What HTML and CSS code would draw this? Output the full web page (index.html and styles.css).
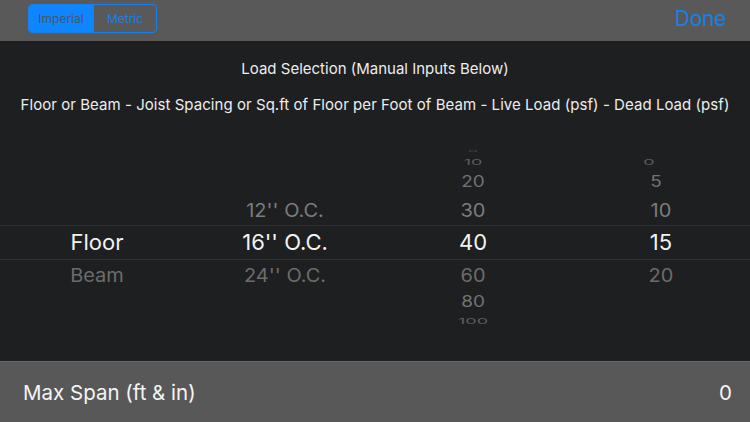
FILE: index.html
```html
<!DOCTYPE html>
<html>
<head>
<meta charset="utf-8">
<link rel="stylesheet" href="styles.css">
</head>
<body>
<div class="app">
  <header class="topbar">
    <div class="segmented">
      <span class="seg seg-on">Imperial</span>
      <span class="seg">Metric</span>
    </div>
    <span class="done">Done</span>
  </header>
  <main class="panel">
    <p class="title">Load Selection (Manual Inputs Below)</p>
    <p class="subtitle">Floor or Beam - Joist Spacing or Sq.ft of Floor per Foot of Beam - Live Load (psf) - Dead Load (psf)</p>
    <div class="picker">
      <div class="row r4"><span></span><span></span><span><i>0</i></span><span></span></div>
      <div class="row r3"><span></span><span></span><span><i>10</i></span><span><i class="shift-l">0</i></span></div>
      <div class="row r2"><span></span><span></span><span><i>20</i></span><span><i class="shift-s">5</i></span></div>
      <div class="row r1"><span></span><span><i>12'' O.C.</i></span><span><i>30</i></span><span><i>10</i></span></div>
      <div class="row sel"><span><i>Floor</i></span><span><i>16'' O.C.</i></span><span><i>40</i></span><span><i>15</i></span></div>
      <div class="row b1"><span><i>Beam</i></span><span><i>24'' O.C.</i></span><span><i>60</i></span><span><i>20</i></span></div>
      <div class="row b2"><span></span><span></span><span><i>80</i></span><span></span></div>
      <div class="row b3"><span></span><span></span><span><i>100</i></span><span></span></div>
    </div>
  </main>
  <footer class="result">
    <span class="result-label">Max Span (ft &amp; in)</span>
    <span class="result-value">0</span>
  </footer>
</div>
</body>
</html>
```
FILE: styles.css
```css
* { box-sizing: border-box; }
html, body { margin: 0; padding: 0; }
body {
  width: 750px;
  height: 422px;
  overflow: hidden;
  font-family: "Inter", "Roboto", "Liberation Sans", sans-serif;
  background: #1e1f21;
}
.app {
  display: flex;
  flex-direction: column;
  height: 422px;
}
.topbar {
  height: 41px;
  flex: none;
  background: #595959;
  display: flex;
  align-items: center;
  justify-content: space-between;
  padding: 0 24px 5px 28px;
}
.segmented {
  display: flex;
  height: 29px;
  width: 129px;
  border: 1px solid #1a7fe8;
  border-radius: 4px;
  overflow: hidden;
}
.seg {
  flex: 1;
  display: flex;
  align-items: center;
  justify-content: center;
  font-size: 12px;
  color: #1a7fe8;
}
.seg-on {
  flex: none;
  width: 65px;
  background: #0e86ff;
  color: #4b5565;
  border-right: 1px solid #1a7fe8;
}
.done {
  font-size: 21px;
  color: #1a7fe8;
  letter-spacing: -0.3px;
}
.panel {
  flex: 1;
  background: #1e1f21;
  color: #ededed;
  display: flex;
  flex-direction: column;
  align-items: center;
  padding-top: 18px;
}
.title, .subtitle {
  margin: 0;
  font-size: 15px;
  line-height: 20px;
  text-align: center;
  white-space: nowrap;
}
.subtitle { margin-top: 16px; letter-spacing: 0.05px; }
.picker {
  margin-top: 32px;
  width: 750px;
}
.row {
  display: grid;
  grid-template-columns: repeat(4, 188px);
  padding-left: 3px;
  text-align: center;
  white-space: nowrap;
}
.row span { display: block; }
.row i {
  font-style: normal;
  display: inline-block;
}
.shift-l { margin-right: 24px; }
.shift-s { margin-right: 10px; }
.r4 { height: 8px; line-height: 8px; font-size: 16px; color: #4a4a4a; }
.r4 i { transform: scaleY(0.15); }
.r3, .b3 { height: 14px; line-height: 14px; font-size: 18px; color: #5c5c5c; }
.r3 i, .b3 i { transform: scaleY(0.45); }
.r2, .b2 { height: 26px; line-height: 26px; font-size: 19px; color: #727272; }
.b2 { height: 24px; line-height: 24px; }
.r2 i, .b2 i { transform: scaleY(0.8); }
.r1 { height: 30px; line-height: 30px; font-size: 20px; color: #7c7c7c; }
.b1 { height: 30px; line-height: 30px; font-size: 20px; color: #6c6c6c; }
.r1 i, .b1 i { transform: scaleY(0.93); }
.sel {
  height: 35px;
  line-height: 33px;
  font-size: 22px;
  color: #f2f2f2;
  border-top: 1px solid #2f3033;
  border-bottom: 1px solid #2f3033;
}
.result {
  height: 61px;
  flex: none;
  background: #585858;
  border-top: 1px solid #6a6a6a;
  display: flex;
  align-items: center;
  justify-content: space-between;
  padding: 0 18px 0 23px;
  color: #f4f4f4;
  font-size: 20.5px;
}
```
